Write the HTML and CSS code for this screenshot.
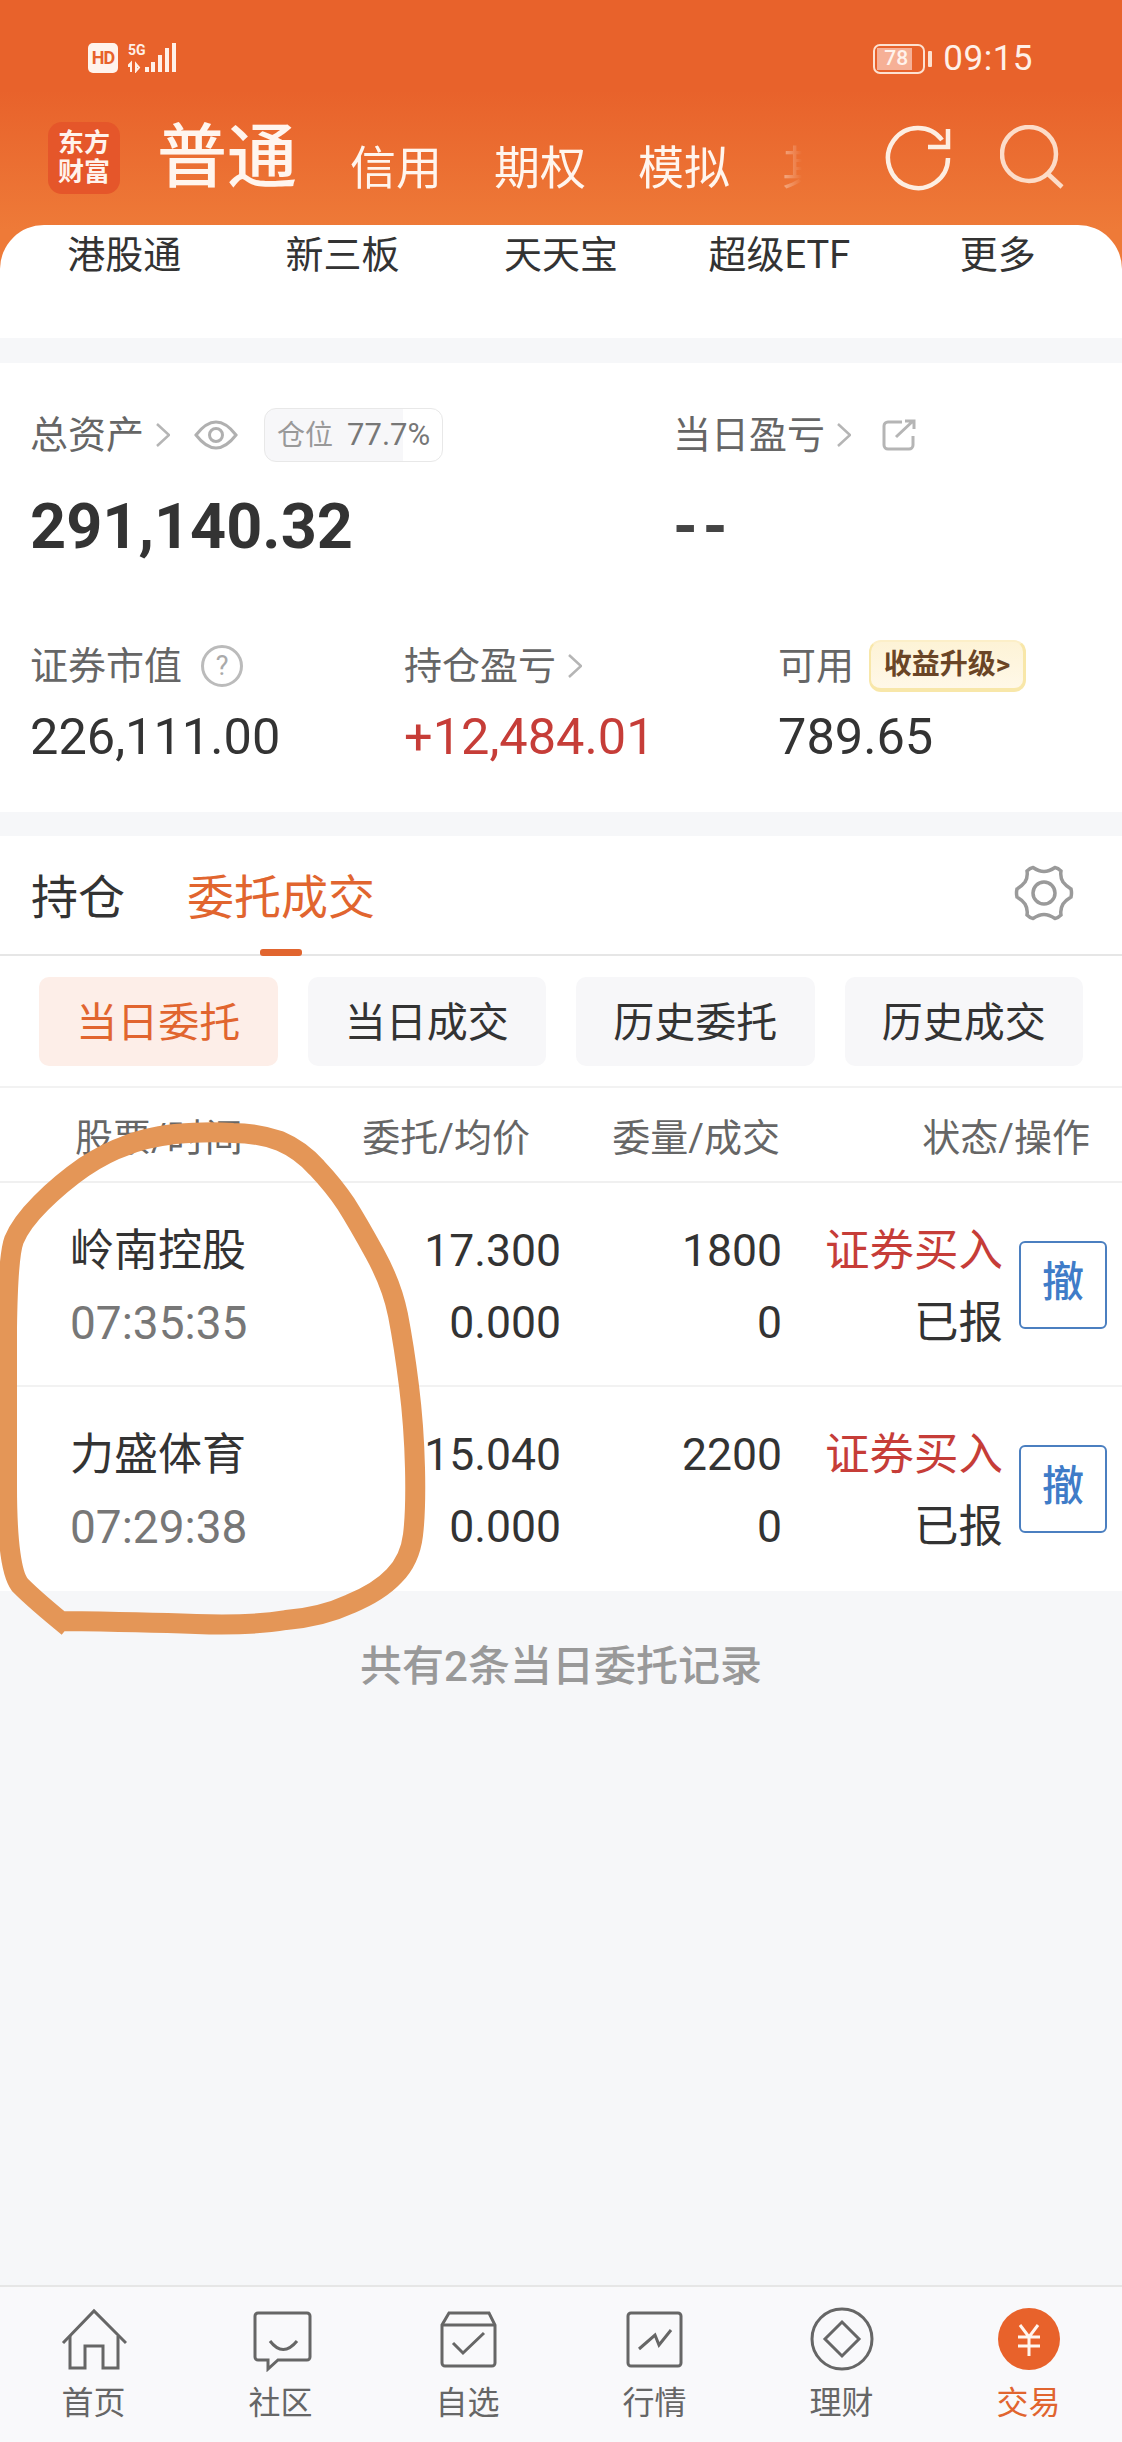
FILE: index.html
```html
<!DOCTYPE html>
<html lang="zh-CN">
<head>
  <meta charset="UTF-8">
  <title>东方财富 - 交易</title>
  <link rel="stylesheet" href="styles.css">
</head>
<body>
  <div class="page">
    <div class="header">
      <div class="status-bar">
        <div class="status-left">
          <span class="hd-icon">HD</span>
          <svg class="signal-icon" width="50" height="30" viewBox="0 0 50 30">
            <text x="0" y="12" class="signal-text">5G</text>
            <path d="M3 20 l-3 3 h3z M3 20 v9 M8 21 v7 l3 -3.5z" class="signal-arrow"/>
            <rect x="17" y="24" width="4" height="5"/>
            <rect x="23" y="19" width="4" height="10"/>
            <rect x="30" y="12" width="4" height="17"/>
            <rect x="37" y="5" width="4" height="24"/>
            <rect x="44" y="0" width="4" height="29"/>
          </svg>
        </div>
        <div class="status-right">
          <span class="battery"><span class="battery-fill"></span><span class="battery-num">78</span></span>
          <span class="battery-nub"></span>
          <span class="status-time">09:15</span>
        </div>
      </div>
      <div class="top-nav">
        <div class="app-logo">东方<br>财富</div>
        <div class="account-main">普通</div>
        <div class="account-tabs">
          <span>信用</span>
          <span>期权</span>
          <span>模拟</span>
          <span>其他</span>
        </div>
        <svg class="refresh-icon" width="66" height="66" viewBox="0 0 66 66">
          <path d="M63 33 A30 30 0 1 1 57 15"/>
          <path d="M43 22 H63 V4"/>
        </svg>
        <svg class="search-icon" width="66" height="66" viewBox="0 0 66 66">
          <circle cx="29" cy="29" r="27"/>
          <path d="M48 49 L62 62"/>
        </svg>
      </div>
      <div class="quick-row">
        <span>港股通</span>
        <span>新三板</span>
        <span>天天宝</span>
        <span>超级ETF</span>
        <span>更多</span>
      </div>
    </div>

    <div class="asset-card">
      <div class="asset-top">
        <div>
          <div class="label-line">
            <span>总资产</span>
            <svg class="chevron" width="15" height="24" viewBox="0 0 15 24"><path d="M2 1 L14 12 L2 23"/></svg>
            <svg class="eye-icon" width="44" height="30" viewBox="0 0 44 30">
              <path d="M2 15 Q22 -11 42 15 Q22 41 2 15Z"/>
              <circle cx="22" cy="15" r="6.5"/>
            </svg>
            <span class="position-badge"><span class="position-name">仓位</span>77.7%</span>
          </div>
          <div class="total-value">291,140.32</div>
        </div>
        <div>
          <div class="label-line">
            <span>当日盈亏</span>
            <svg class="chevron" width="15" height="24" viewBox="0 0 15 24"><path d="M2 1 L14 12 L2 23"/></svg>
            <svg class="share-icon" width="34" height="32" viewBox="0 0 34 32">
              <path d="M20 3 H6 a4 4 0 0 0 -4 4 V26 a4 4 0 0 0 4 4 H27 a4 4 0 0 0 4 -4 V17"/>
              <path d="M14 18 L31 2 M23 2 H32 V10"/>
            </svg>
          </div>
          <div class="total-value total-empty">--</div>
        </div>
      </div>
      <div class="asset-bottom">
        <div>
          <div class="label-line">
            <span>证券市值</span>
            <span class="help-icon">?</span>
          </div>
          <div class="sub-value">226,111.00</div>
        </div>
        <div>
          <div class="label-line">
            <span>持仓盈亏</span>
            <svg class="chevron" width="15" height="24" viewBox="0 0 15 24"><path d="M2 1 L14 12 L2 23"/></svg>
          </div>
          <div class="sub-value red">+12,484.01</div>
        </div>
        <div>
          <div class="label-line">
            <span>可用</span>
            <span class="upgrade-badge">收益升级&gt;</span>
          </div>
          <div class="sub-value">789.65</div>
        </div>
      </div>
    </div>

    <div class="orders">
      <div class="order-tabs">
        <span>持仓</span>
        <span class="order-tab-active">委托成交</span>
        <svg class="gear-icon" width="60" height="60" viewBox="0 0 60 60">
          <path d="M19 4.5 Q25 8.5 30 8.5 Q35 8.5 41 4.5 Q44 5 47 8 Q46 14 49 19 Q52 23 57 26 Q58 30 57 34 Q52 37 49 41 Q46 46 47 52 Q44 55 41 55.5 Q35 51.5 30 51.5 Q25 51.5 19 55.5 Q16 55 13 52 Q14 46 11 41 Q8 37 3 34 Q2 30 3 26 Q8 23 11 19 Q14 14 13 8 Q16 5 19 4.5Z"/>
          <circle cx="30" cy="30" r="11"/>
        </svg>
      </div>
      <div class="sub-tabs">
        <span class="sub-tab sub-tab-active">当日委托</span>
        <span class="sub-tab">当日成交</span>
        <span class="sub-tab">历史委托</span>
        <span class="sub-tab">历史成交</span>
      </div>
      <div class="table-head">
        <span class="head-name">股票/时间</span>
        <span>委托/均价</span>
        <span>委量/成交</span>
        <span>状态/操作</span>
      </div>
      <div class="order-row">
        <div class="cell-name">岭南控股<div class="cell-time">07:35:35</div></div>
        <div class="cell-num">17.300<br>0.000</div>
        <div class="cell-num">1800<br>0</div>
        <div class="cell-num"><span class="red">证券买入</span><br>已报</div>
        <div class="cell-action"><span class="cancel-btn">撤</span></div>
      </div>
      <div class="order-row">
        <div class="cell-name">力盛体育<div class="cell-time">07:29:38</div></div>
        <div class="cell-num">15.040<br>0.000</div>
        <div class="cell-num">2200<br>0</div>
        <div class="cell-num"><span class="red">证券买入</span><br>已报</div>
        <div class="cell-action"><span class="cancel-btn">撤</span></div>
      </div>
    </div>

    <div class="record-area">共有2条当日委托记录</div>

    <div class="bottom-nav">
      <div class="nav-item">
        <svg width="66" height="66" viewBox="0 0 66 66"><path d="M2 37 L33 5 L65 37"/><path d="M9 30 V62 H24 V40 H42 V62 H57 V30"/></svg>
        首页
      </div>
      <div class="nav-item">
        <svg width="66" height="66" viewBox="0 0 66 66"><path d="M10 7 H59 a3 3 0 0 1 3 3 V51 a3 3 0 0 1 -3 3 H30 L20 63 V54 H10 a3 3 0 0 1 -3 -3 V10 a3 3 0 0 1 3 -3Z"/><path d="M22 35 Q35 52 49 35"/></svg>
        社区
      </div>
      <div class="nav-item">
        <svg width="66" height="66" viewBox="0 0 66 66"><path d="M14 7 H54 L60 19 V57 a3 3 0 0 1 -3 3 H10 a3 3 0 0 1 -3 -3 V19Z"/><path d="M7 19 H60"/><path d="M18 37 L28 47 L49 27"/></svg>
        自选
      </div>
      <div class="nav-item">
        <svg width="66" height="66" viewBox="0 0 66 66"><rect x="6" y="7" width="53" height="53" rx="3"/><path d="M17 43 L33 29 L37 39 L49 24"/></svg>
        行情
      </div>
      <div class="nav-item">
        <svg width="66" height="66" viewBox="0 0 66 66"><circle cx="33" cy="33" r="30"/><path d="M33 16 L50 33 L33 50 L16 33Z"/></svg>
        理财
      </div>
      <div class="nav-item nav-item-active">
        <svg width="66" height="66" viewBox="0 0 66 66"><circle class="trade-circle" cx="33" cy="33" r="31"/><path class="trade-yen" d="M24 19 L33 31 L42 19 M22 31 H44 M22 40 H44 M33 31 V50"/></svg>
        交易
      </div>
    </div>

    <svg class="hand-circle" width="1122" height="2442" viewBox="0 0 1122 2442">
      <path d="M62 1621 Q143 1622 196 1624 Q250 1626 286 1620 Q322 1617 350 1604 Q379 1592 394 1576 Q410 1560 413 1535 Q416 1510 415 1468 Q414 1426 409 1386 Q404 1346 398 1315 Q392 1285 375 1254 Q358 1223 346 1204 Q334 1186 317 1168 Q301 1150 280 1141 Q258 1133 233 1133 Q208 1131 175 1134 Q143 1138 125 1146 Q107 1152 84 1167 Q61 1183 41 1203 Q21 1223 14 1240 Q8 1256 7 1328 Q7 1400 7 1486 Q7 1572 21 1586 Q36 1601 68 1627"/>
    </svg>
  </div>
</body>
</html>
```

FILE: styles.css
```css
html, body {
  margin: 0;
  padding: 0;
}
body {
  font-family: Roboto, "Noto Sans CJK SC", sans-serif;
  color: #333;
  background-color: #f6f7f9;
}
.page {
  position: relative;
  display: flex;
  flex-direction: column;
  height: 2442px;
  overflow: hidden;
}
.red {
  color: #c63d38;
}

/* header */
.header {
  background: linear-gradient(#e8622b 0, #e8622b 90px, #ee7a38 230px);
}
.status-bar {
  display: flex;
  justify-content: space-between;
  height: 110px;
  box-sizing: border-box;
  padding: 43px 89px 0 88px;
}
.status-left {
  display: flex;
  gap: 10px;
  height: 30px;
}
.hd-icon {
  width: 30px;
  height: 30px;
  border-radius: 5px;
  background-color: #fff3ec;
  color: #e8622b;
  font-size: 18px;
  font-weight: 700;
  line-height: 30px;
  text-align: center;
  letter-spacing: -1px;
}
.signal-icon rect {
  fill: #fff0e8;
}
.signal-text {
  font-size: 14px;
  font-weight: 700;
  fill: #fff0e8;
}
.signal-arrow {
  fill: none;
  stroke: #fff0e8;
  stroke-width: 2;
}
.status-right {
  display: flex;
  align-items: center;
  height: 30px;
  margin-top: 1px;
}
.battery {
  position: relative;
  width: 52px;
  height: 30px;
  box-sizing: border-box;
  border: 2.5px solid #fde1d0;
  border-radius: 7px;
  overflow: hidden;
}
.battery-fill {
  position: absolute;
  left: 2px;
  top: 2px;
  bottom: 2px;
  width: 35px;
  background-color: #f6b096;
}
.battery-num {
  position: absolute;
  left: 9px;
  top: 0;
  color: #fff3ec;
  font-size: 21px;
  font-weight: 500;
  line-height: 25px;
}
.battery-nub {
  width: 4px;
  height: 16px;
  margin-left: 3px;
  border-radius: 1px;
  background-color: #fde1d0;
}
.status-time {
  margin-left: 11px;
  color: #fff0e8;
  font-size: 35px;
  line-height: 30px;
  letter-spacing: 0.5px;
}
.top-nav {
  display: flex;
  align-items: flex-start;
  height: 115px;
  padding-left: 48px;
  color: #fff5ee;
}
.app-logo {
  width: 72px;
  height: 72px;
  margin-top: 12px;
  border-radius: 14px;
  background-color: #e5562a;
  color: #fff3ec;
  font-size: 26px;
  font-weight: 700;
  line-height: 29px;
  text-align: center;
  padding-top: 7px;
  box-sizing: border-box;
}
.account-main {
  margin-left: 37px;
  margin-top: 8px;
  font-size: 70px;
  font-weight: 500;
  line-height: 80px;
}
.account-tabs {
  display: flex;
  gap: 52px;
  width: 452px;
  margin-left: 53px;
  margin-top: 28px;
  overflow: hidden;
  font-size: 46px;
  line-height: 60px;
  white-space: nowrap;
  -webkit-mask-image: linear-gradient(to right, #000 412px, rgba(0,0,0,0.45) 432px, transparent 452px);
  mask-image: linear-gradient(to right, #000 412px, rgba(0,0,0,0.45) 432px, transparent 452px);
}
.account-tabs span {
  flex: none;
}
.refresh-icon, .search-icon {
  position: absolute;
  top: 125px;
  fill: none;
  stroke-width: 4.5;
}
.refresh-icon {
  left: 885px;
  stroke: #fdeee2;
}
.search-icon {
  left: 1000px;
  stroke: #fcdcc8;
}
.quick-row {
  display: grid;
  grid-template-columns: repeat(5, 1fr);
  height: 113px;
  box-sizing: border-box;
  padding: 0 15px;
  background-color: #fff;
  border-radius: 44px 44px 0 0;
  font-size: 38px;
  line-height: 60px;
  text-align: center;
}

/* assets */
.asset-card {
  margin-top: 25px;
  padding: 45px 0 50px 30px;
  background-color: #fff;
}
.asset-top {
  display: grid;
  grid-template-columns: 643px 1fr;
}
.asset-bottom {
  display: grid;
  grid-template-columns: repeat(3, 374px);
  margin-top: 76px;
}
.label-line {
  display: flex;
  align-items: center;
  height: 54px;
  color: #666;
  font-size: 38px;
  line-height: 54px;
}
.chevron {
  margin-left: 11px;
  fill: none;
  stroke: #b5b5b5;
  stroke-width: 2.5;
}
.eye-icon {
  margin-left: 24px;
  fill: none;
  stroke: #b0b0b0;
  stroke-width: 3;
}
.share-icon {
  margin-left: 31px;
  fill: none;
  stroke: #b5b5b5;
  stroke-width: 3;
}
.position-badge {
  width: 179px;
  height: 54px;
  box-sizing: border-box;
  margin-left: 26px;
  padding-left: 12px;
  border: 1.5px solid #e8e8e8;
  border-radius: 12px;
  background: linear-gradient(to right, #f7f7f9 77.7%, #fff 77.7%);
  color: #777;
  font-size: 31px;
  line-height: 51px;
  white-space: nowrap;
}
.position-name {
  margin-right: 14px;
  color: #999;
  font-size: 28px;
}
.total-value {
  margin-top: 29px;
  font-size: 63px;
  font-weight: 700;
  line-height: 72px;
}
.total-empty {
  color: #444;
  letter-spacing: 5px;
}
.sub-value {
  margin-top: 19px;
  font-size: 50.5px;
  line-height: 50px;
}
.help-icon {
  width: 36px;
  height: 36px;
  margin-left: 19px;
  border: 3px solid #bbb;
  border-radius: 50%;
  color: #aaa;
  font-size: 27px;
  line-height: 36px;
  text-align: center;
}
.upgrade-badge {
  width: 157px;
  height: 52px;
  box-sizing: border-box;
  margin-left: 15px;
  border-radius: 12px;
  background: linear-gradient(#fdf3d6, #fff8e8);
  border-bottom: 4px solid #f8e7a9;
  border-left: 2px solid #f8e7a9;
  border-right: 3px solid #f8e7a9;
  border-top: 2px solid #fcefc8;
  color: #6a4526;
  font-size: 28px;
  font-weight: 700;
  line-height: 46px;
  text-align: center;
  white-space: nowrap;
}

/* orders */
.orders {
  margin-top: 24px;
  background-color: #fff;
}
.order-tabs {
  position: relative;
  display: flex;
  align-items: center;
  gap: 62px;
  height: 120px;
  box-sizing: border-box;
  padding: 6px 0 0 31px;
  border-bottom: 2px solid #e6e6e6;
  font-size: 47px;
  line-height: 116px;
}
.order-tab-active {
  position: relative;
  color: #e1652f;
}
.order-tab-active::after {
  content: "";
  position: absolute;
  left: 73px;
  bottom: 0;
  width: 42px;
  height: 7px;
  border-radius: 3px;
  background-color: #e1652f;
}
.gear-icon {
  margin-left: auto;
  margin-right: 48px;
  margin-top: -10px;
  fill: none;
  stroke: #9a9a9a;
  stroke-width: 3.5;
}
.sub-tabs {
  display: flex;
  gap: 30px;
  padding: 21px 39px 20px;
  border-bottom: 2px solid #f2f2f2;
}
.sub-tab {
  flex: 1;
  height: 89px;
  border-radius: 10px;
  background-color: #f7f7f9;
  font-size: 41px;
  line-height: 93px;
  text-align: center;
}
.sub-tab-active {
  background-color: #fdeee8;
  color: #e1652f;
}
.table-head {
  display: grid;
  grid-template-columns: 170px 285px 250px 310px;
  height: 95px;
  box-sizing: border-box;
  padding: 5px 0 0 75px;
  border-bottom: 2px solid #f0f0f0;
  color: #666;
  font-size: 38px;
  line-height: 90px;
  text-align: right;
  white-space: nowrap;
}
.head-name {
  text-align: left;
}
.order-row {
  display: grid;
  grid-template-columns: 204px 287px 221px 221px 104px;
  height: 204px;
  box-sizing: border-box;
  padding: 32px 0 0 70px;
  border-bottom: 2px solid #f2f2f2;
  font-size: 44px;
  line-height: 72px;
}
.order-row:last-child {
  border-bottom: none;
}
.cell-time {
  color: #777;
  font-size: 46px;
}
.cell-num {
  font-size: 44.5px;
  text-align: right;
  white-space: nowrap;
}
.cell-action {
  display: flex;
  justify-content: flex-end;
  padding-top: 26px;
}
.cancel-btn {
  width: 88px;
  height: 88px;
  box-sizing: border-box;
  border: 2.5px solid #4b7fc0;
  border-radius: 6px;
  color: #3f7cc8;
  font-size: 42px;
  font-weight: 500;
  line-height: 80px;
  text-align: center;
}

/* footer */
.record-area {
  flex: 1;
  padding-top: 46px;
  color: #999;
  font-size: 42px;
  font-weight: 500;
  line-height: 60px;
  text-align: center;
}
.bottom-nav {
  display: grid;
  grid-template-columns: repeat(6, 1fr);
  height: 157px;
  box-sizing: border-box;
  padding-top: 19px;
  border-top: 2px solid #e6e6e6;
  background-color: #f9f9fb;
}
.nav-item {
  display: flex;
  flex-direction: column;
  align-items: center;
  color: #666;
  font-size: 32px;
  line-height: 38px;
}
.nav-item svg {
  margin-bottom: 12px;
  fill: none;
  stroke: #666;
  stroke-width: 3;
}
.nav-item-active {
  color: #e1652f;
}
.nav-item svg .trade-circle {
  fill: #e8622b;
  stroke: none;
}
.nav-item svg .trade-yen {
  stroke: #fff5ee;
  stroke-width: 3;
}
.hand-circle {
  position: absolute;
  left: 0;
  top: 0;
  fill: none;
  stroke: #e49657;
  stroke-width: 20;
  pointer-events: none;
}
```
